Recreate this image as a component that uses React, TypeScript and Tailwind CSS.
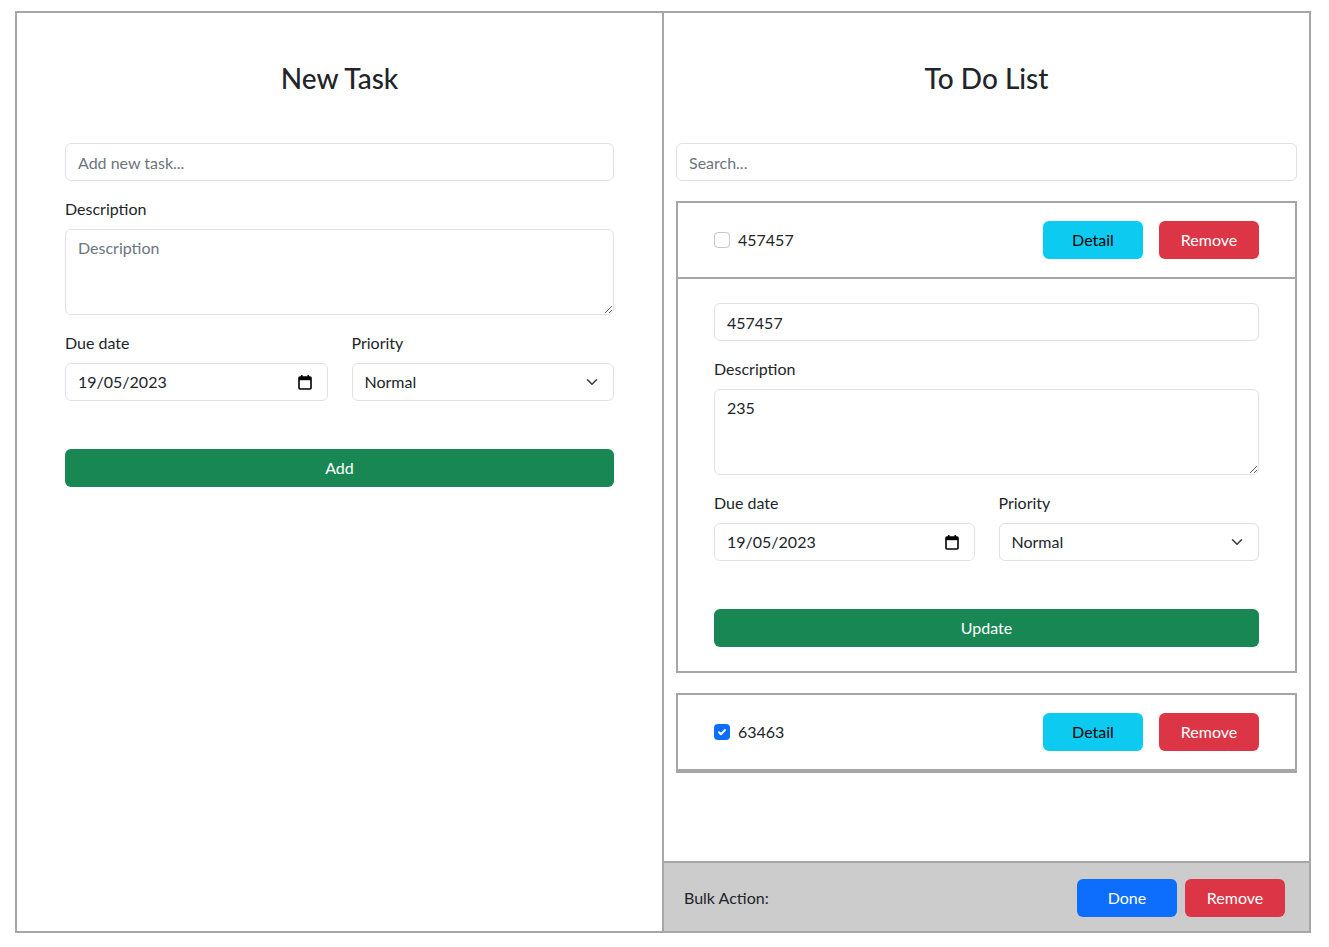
import React from "react";

const inputCls =
  "w-full h-[38px] px-3 rounded-[6px] border border-[#dee2e6] bg-white text-[16px] text-[#212529] outline-none placeholder:text-[#6c757d]";

function CalendarIcon() {
  return (
    <svg width="14" height="16" viewBox="0 0 14 16" className="shrink-0">
      <rect x="3" y="1" width="1.6" height="3" fill="#000" />
      <rect x="9.4" y="1" width="1.6" height="3" fill="#000" />
      <rect x="1" y="3" width="12" height="12" rx="1" fill="none" stroke="#000" strokeWidth="1.6" />
      <rect x="1" y="3" width="12" height="3.2" fill="#000" />
    </svg>
  );
}

function Chevron() {
  return (
    <svg width="12" height="12" viewBox="0 0 16 16" className="shrink-0">
      <path d="M2 5l6 6 6-6" fill="none" stroke="#343a40" strokeWidth="2" strokeLinecap="round" strokeLinejoin="round" />
    </svg>
  );
}

function DateField({ value }: { value: string }) {
  return (
    <div className="h-[38px] px-3 rounded-[6px] border border-[#dee2e6] bg-white flex items-center justify-between text-[16px] text-[#212529]">
      <span>{value}</span>
      <span className="mr-[3px]">
        <CalendarIcon />
      </span>
    </div>
  );
}

function SelectField({ value }: { value: string }) {
  return (
    <div className="h-[38px] pl-3 pr-[15px] rounded-[6px] border border-[#dee2e6] bg-white flex items-center justify-between text-[16px] text-[#212529]">
      <span>{value}</span>
      <Chevron />
    </div>
  );
}

function TaskForm({ name, desc, button }: { name: string; desc: string; button: string }) {
  return (
    <div className="flex flex-col">
      <input className={inputCls} placeholder="Add new task..." defaultValue={name} />
      <label className="mt-4 mb-2 leading-6">Description</label>
      <textarea
        className="w-full h-[86px] px-3 py-[6px] rounded-[6px] border border-[#dee2e6] bg-white text-[16px] leading-6 outline-none placeholder:text-[#6c757d]"
        placeholder="Description"
        defaultValue={desc}
      />
      <div className="mt-4 grid grid-cols-2 gap-6">
        <div className="flex flex-col">
          <label className="mb-2 leading-6">Due date</label>
          <DateField value="19/05/2023" />
        </div>
        <div className="flex flex-col">
          <label className="mb-2 leading-6">Priority</label>
          <SelectField value="Normal" />
        </div>
      </div>
      <button className="mt-12 h-[38px] w-full rounded-[6px] bg-[#198754] text-white text-[16px]">{button}</button>
    </div>
  );
}

function Checkbox({ checked }: { checked: boolean }) {
  return checked ? (
    <span className="w-4 h-4 rounded-[4px] bg-[#0d6efd] flex items-center justify-center">
      <svg width="12" height="12" viewBox="0 0 20 20">
        <path d="M5 10.5l3.2 3.2 6.8-7" fill="none" stroke="#fff" strokeWidth="3.2" strokeLinecap="round" strokeLinejoin="round" />
      </svg>
    </span>
  ) : (
    <span className="w-4 h-4 rounded-[4px] border border-[#c4c8cc] bg-white" />
  );
}

function TaskHeader({ title, checked }: { title: string; checked: boolean }) {
  return (
    <div className="h-[74px] px-9 flex items-center justify-between">
      <div className="flex items-center gap-2">
        <Checkbox checked={checked} />
        <span className="leading-6">{title}</span>
      </div>
      <div className="flex gap-4">
        <button className="w-[100px] h-[38px] rounded-[6px] bg-[#0dcaf0] text-black text-[16px]">Detail</button>
        <button className="w-[100px] h-[38px] rounded-[6px] bg-[#dc3545] text-white text-[16px]">Remove</button>
      </div>
    </div>
  );
}

export default function App() {
  return (
    <div
      className="bg-white text-[#212529] text-[16px]"
      style={{ fontFamily: "Lato, 'Open Sans', sans-serif" }}
    >
      <div className="ml-[15px] mt-[11px] w-[1296px] h-[922px] border-2 border-[#a6a6a6] flex">
        {/* New task panel */}
        <div className="w-[647px] border-r-2 border-[#a6a6a6] px-12 pt-12">
          <h3 className="text-[28px] font-medium leading-[34px] text-center">New Task</h3>
          <div className="mt-12">
            <TaskForm name="" desc="" button="Add" />
          </div>
        </div>

        {/* To do list panel */}
        <div className="flex-1 flex flex-col">
          <div className="flex-1 px-3 pt-12">
            <h3 className="text-[28px] font-medium leading-[34px] text-center">To Do List</h3>
            <input className={inputCls + " mt-12"} placeholder="Search..." />

            <div className="mt-5 border-2 border-[#a6a6a6]">
              <TaskHeader title="457457" checked={false} />
              <div className="border-t-2 border-[#a6a6a6] px-9 pt-6 pb-6">
                <TaskForm name="457457" desc="235" button="Update" />
              </div>
            </div>

            <div className="mt-5 border-2 border-[#a6a6a6]">
              <TaskHeader title="63463" checked={true} />
              <div className="border-t-2 border-[#a6a6a6]" />
            </div>
          </div>

          <div className="h-[70px] bg-[#cccccc] border-t-2 border-[#a6a6a6] pl-5 pr-6 pt-4 flex items-start justify-between">
            <span className="leading-[38px]">Bulk Action:</span>
            <div className="flex gap-2">
              <button className="w-[100px] h-[38px] rounded-[6px] bg-[#0d6efd] text-white text-[16px]">Done</button>
              <button className="w-[100px] h-[38px] rounded-[6px] bg-[#dc3545] text-white text-[16px]">Remove</button>
            </div>
          </div>
        </div>
      </div>
    </div>
  );
}
